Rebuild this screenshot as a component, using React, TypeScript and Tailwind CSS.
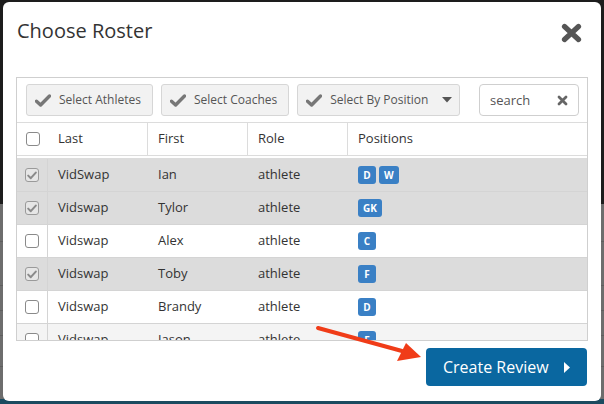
import React from "react";

type Row = {
  last: string;
  first: string;
  role: string;
  positions: string[];
  checked: boolean;
  bg: string;
};

const rows: Row[] = [
  { last: "VidSwap", first: "Ian", role: "athlete", positions: ["D", "W"], checked: true, bg: "bg-[#dcdcdc]" },
  { last: "Vidswap", first: "Tylor", role: "athlete", positions: ["GK"], checked: true, bg: "bg-[#dcdcdc]" },
  { last: "Vidswap", first: "Alex", role: "athlete", positions: ["C"], checked: false, bg: "bg-white" },
  { last: "Vidswap", first: "Toby", role: "athlete", positions: ["F"], checked: true, bg: "bg-[#dcdcdc]" },
  { last: "Vidswap", first: "Brandy", role: "athlete", positions: ["D"], checked: false, bg: "bg-white" },
  { last: "Vidswap", first: "Jason", role: "athlete", positions: ["F"], checked: false, bg: "bg-[#f4f4f4]" },
];

const CheckIcon = () => (
  <svg width="16" height="13" viewBox="0 0 16 13" className="shrink-0">
    <path d="M1.5 7.2 L5.6 11 L14.5 2" fill="none" stroke="#777" strokeWidth="3.4" strokeLinecap="round" strokeLinejoin="round" />
  </svg>
);

const Checkbox = ({ checked }: { checked: boolean }) => (
  <div
    className={
      checked
        ? "w-[14px] h-[14px] rounded-[3px] border border-[#9a9a9a] bg-[#e6e6e6] flex items-center justify-center"
        : "w-[14px] h-[14px] rounded-[3px] border border-[#8a8a8a] bg-white"
    }
  >
    {checked && (
      <svg width="10" height="9" viewBox="0 0 10 9">
        <path d="M1.2 4.6 L3.8 7.2 L8.8 1.6" fill="none" stroke="#8a8a8a" strokeWidth="2" strokeLinecap="round" strokeLinejoin="round" />
      </svg>
    )}
  </div>
);

const ToolButton = ({ label, caret }: { label: string; caret?: boolean }) => (
  <div
    className={`h-[32px] flex items-center gap-[8px] pl-[8px] bg-[#f2f2f2] border border-[#d6d6d6] rounded-[3px] text-[12px] text-[#555] ${
      caret ? "pr-[7px]" : "pr-[11px]"
    }`}
  >
    <CheckIcon />
    <span>{label}</span>
    {caret && (
      <svg width="10" height="6" viewBox="0 0 10 6" className="ml-[6px]">
        <path d="M0 0 L10 0 L5 5.5 Z" fill="#555" />
      </svg>
    )}
  </div>
);

const App = () => {
  return (
    <div className="relative w-[604px] h-[404px] overflow-hidden bg-[#1d1d1d] flex flex-col font-['Open_Sans',sans-serif]">
      {/* page behind the modal */}
      <div className="h-[204px]" />
      <div className="flex-1 bg-[#6d6d6d] flex flex-col">
        <div className="h-[38px] border-b border-[#5e5e5e]" />
        <div className="h-[44px] border-b border-[#5e5e5e]" />
        <div className="h-[25px] border-b border-[#5e5e5e]" />
        <div className="h-[25px] border-b border-[#5e5e5e]" />
        <div className="h-[31px] border-b border-[#5e5e5e]" />
      </div>
      <div className="h-[5px] bg-[#1b4b60]" />

      {/* modal */}
      <div className="absolute left-[3px] top-[2px] w-[598px] h-[399px] bg-white rounded-[6px] flex flex-col px-[13px]">
        <div className="h-[75px] flex items-start justify-between pt-[15px]">
          <h2 className="text-[20px] leading-[28px] text-[#333] ml-[1px]">Choose Roster</h2>
          <button className="mt-[6px] mr-[6px]">
            <svg width="21" height="20" viewBox="0 0 21 20">
              <path d="M3.5 3.5 L17.5 16.5 M17.5 3.5 L3.5 16.5" stroke="#555" strokeWidth="5.2" strokeLinecap="round" />
            </svg>
          </button>
        </div>

        <div className="h-[264px] border border-[#cfcfcf] flex flex-col overflow-hidden">
          <div className="h-[44px] shrink-0 flex items-start pt-[6px] pl-[9px] pr-[8px]">
            <div className="flex gap-[8px]">
              <ToolButton label="Select Athletes" />
              <ToolButton label="Select Coaches" />
              <ToolButton label="Select By Position" caret />
            </div>
            <div className="ml-auto h-[32px] w-[100px] border border-[#cfcfcf] rounded-[4px] bg-white flex items-center justify-between pl-[10px] pr-[10px]">
              <span className="text-[13px] text-[#555] mt-[2px]">search</span>
              <svg width="11" height="11" viewBox="0 0 11 11">
                <path d="M2 2 L9 9 M9 2 L2 9" stroke="#666" strokeWidth="2.8" strokeLinecap="round" />
              </svg>
            </div>
          </div>

          <div className="h-[34px] shrink-0 grid grid-cols-[31px_100px_100px_100px_1fr] border-t border-b border-[#dcdcdc] text-[13px] text-[#333]">
            <div className="flex items-center justify-center">
              <Checkbox checked={false} />
            </div>
            <div className="flex items-center pl-[10px] border-r border-[#dcdcdc]">Last</div>
            <div className="flex items-center pl-[10px] border-r border-[#dcdcdc]">First</div>
            <div className="flex items-center pl-[10px] border-r border-[#dcdcdc]">Role</div>
            <div className="flex items-center pl-[10px]">Positions</div>
          </div>

          <div className="flex-1 mt-[2px] border-t border-[#dcdcdc] overflow-hidden">
            {rows.map((r, i) => (
              <div
                key={i}
                className={`h-[33px] grid grid-cols-[31px_100px_100px_100px_1fr] border-b border-[#d4d4d4] text-[13px] text-[#333] ${r.bg}`}
              >
                <div className="flex items-center justify-center border-r border-[#d4d4d4]">
                  <Checkbox checked={r.checked} />
                </div>
                <div className="flex items-center pl-[10px]">{r.last}</div>
                <div className="flex items-center pl-[10px]">{r.first}</div>
                <div className="flex items-center pl-[10px]">{r.role}</div>
                <div className="flex items-center pl-[10px] gap-[3px]">
                  {r.positions.map((p) => (
                    <span
                      key={p}
                      className="h-[18px] min-w-[18px] px-[5px] flex items-center justify-center rounded-[3px] bg-[#3a80c5] text-white text-[10px] font-bold"
                    >
                      {p}
                    </span>
                  ))}
                </div>
              </div>
            ))}
          </div>
        </div>

        <div className="flex justify-end pt-[7px] pr-[1px]">
          <button className="h-[38px] w-[161px] rounded-[4px] bg-[#0a67a0] text-white text-[16px] flex items-center pl-[17px] gap-[15px]">
            <span>Create Review</span>
            <svg width="6" height="11" viewBox="0 0 6 11">
              <path d="M0 0 L6 5.5 L0 11 Z" fill="white" />
            </svg>
          </button>
        </div>
      </div>

      {/* red annotation arrow */}
      <svg className="absolute left-0 top-0 pointer-events-none" width="604" height="404" viewBox="0 0 604 404">
        <line x1="318" y1="328" x2="402" y2="351" stroke="#f03c18" strokeWidth="4" strokeLinecap="round" />
        <path d="M421 357 L397 361 L406 343 Z" fill="#f03c18" />
      </svg>
    </div>
  );
};

export default App;
